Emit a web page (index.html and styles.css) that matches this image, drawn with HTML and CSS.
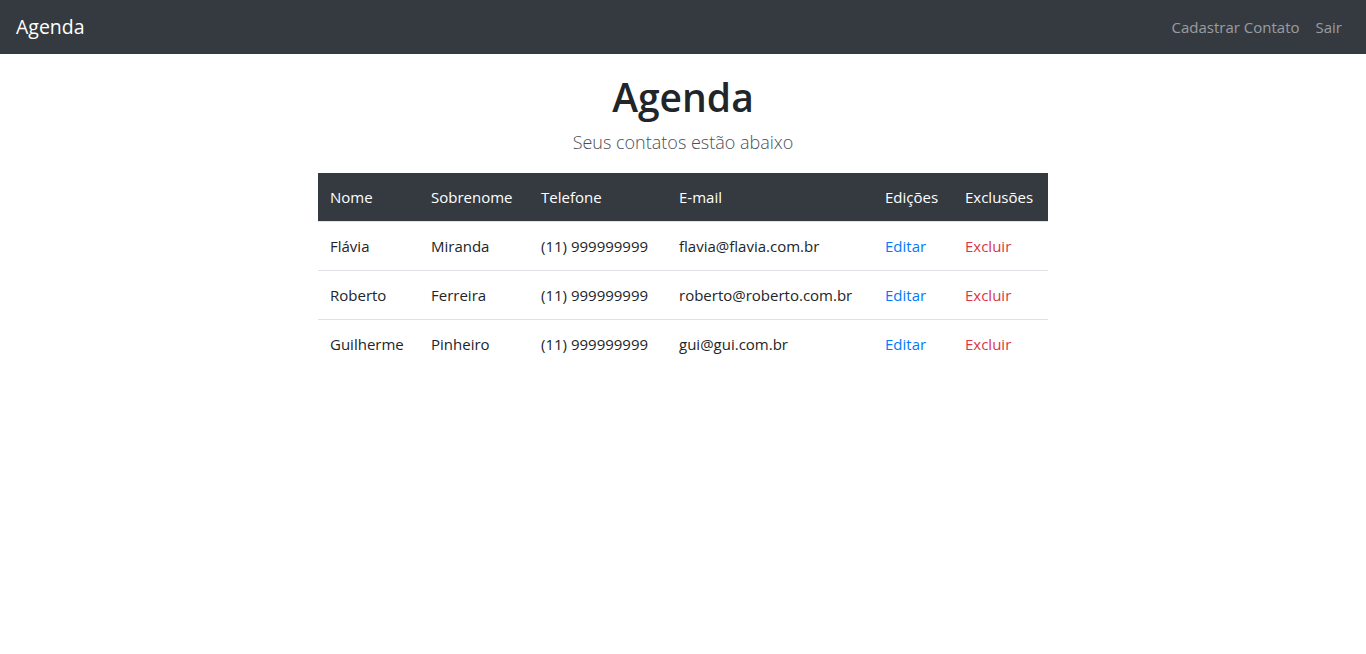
FILE: index.html
```html
<!DOCTYPE html>
<html lang="pt-br">
<head>
<meta charset="utf-8">
<title>Agenda</title>
<link rel="stylesheet" href="styles.css">
</head>
<body>
<nav class="navbar">
  <a class="brand" href="#">Agenda</a>
  <ul class="nav-links">
    <li><a href="#">Cadastrar Contato</a></li>
    <li><a href="#">Sair</a></li>
  </ul>
</nav>
<main class="content">
  <h1 class="title">Agenda</h1>
  <p class="lead">Seus contatos estão abaixo</p>
  <table class="contacts">
    <thead>
      <tr>
        <th class="c-nome">Nome</th>
        <th class="c-sobre">Sobrenome</th>
        <th class="c-tel">Telefone</th>
        <th class="c-email">E-mail</th>
        <th class="c-edit">Edições</th>
        <th class="c-del">Exclusões</th>
      </tr>
    </thead>
    <tbody>
      <tr>
        <td>Flávia</td><td>Miranda</td><td>(11) 999999999</td><td>flavia@flavia.com.br</td>
        <td><a class="edit" href="#">Editar</a></td><td><a class="del" href="#">Excluir</a></td>
      </tr>
      <tr>
        <td>Roberto</td><td>Ferreira</td><td>(11) 999999999</td><td>roberto@roberto.com.br</td>
        <td><a class="edit" href="#">Editar</a></td><td><a class="del" href="#">Excluir</a></td>
      </tr>
      <tr>
        <td>Guilherme</td><td>Pinheiro</td><td>(11) 999999999</td><td>gui@gui.com.br</td>
        <td><a class="edit" href="#">Editar</a></td><td><a class="del" href="#">Excluir</a></td>
      </tr>
    </tbody>
  </table>
</main>
</body>
</html>
```
FILE: styles.css
```css
* { box-sizing: border-box; }
html, body { margin: 0; padding: 0; }
body {
  font-family: "Open Sans", "Noto Sans", "Liberation Sans", sans-serif;
  font-size: 15px;
  color: #212529;
  background: #fff;
}
a { text-decoration: none; }

.navbar {
  display: flex;
  align-items: center;
  justify-content: space-between;
  height: 54px;
  padding: 0 24px 1px 16px;
  background: #343a40;
}
.brand {
  color: #fff;
  font-size: 19.5px;
}
.nav-links {
  display: flex;
  gap: 16px;
  list-style: none;
  margin: 0;
  padding: 0;
}
.nav-links a {
  color: rgba(255,255,255,.5);
  font-size: 15px;
}

.content {
  display: flex;
  flex-direction: column;
  align-items: center;
}
.title {
  margin: 20px 0 0;
  font-size: 39px;
  font-weight: 600;
  line-height: 46px;
  color: #212529;
}
.lead {
  margin: 7px 0 0;
  font-size: 18px;
  font-weight: 300;
  line-height: 30px;
  color: #495057;
}
.contacts {
  margin-top: 16px;
  border-collapse: collapse;
  width: 730px;
  table-layout: fixed;
}
.contacts th, .contacts td {
  padding: 12px;
  line-height: 24px;
  text-align: left;
  white-space: nowrap;
}
.contacts th {
  background: #343a40;
  color: #fff;
  font-weight: 400;
  border: 0;
}
.contacts td { border-top: 1px solid #dee2e6; }
.c-nome { width: 101px; }
.c-sobre { width: 110px; }
.c-tel { width: 138px; }
.c-email { width: 206px; }
.c-edit { width: 80px; }
.c-del { width: 95px; }
.edit { color: #007bff; }
.del { color: #dc3545; }
```
